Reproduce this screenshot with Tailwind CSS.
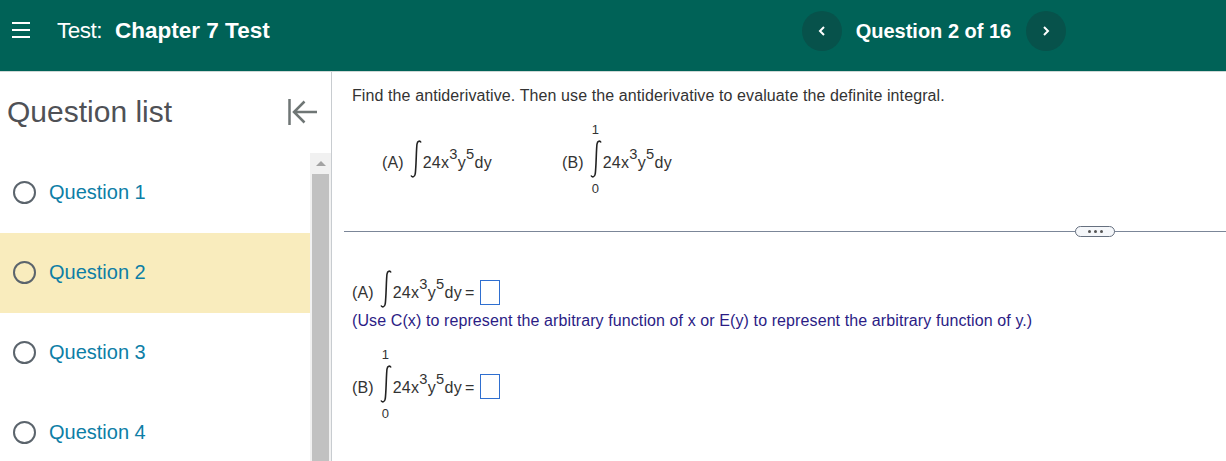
<!DOCTYPE html>
<html lang="en">
<head>
  <meta charset="UTF-8" />
  <title>Chapter 7 Test</title>
  <script src="https://cdn.jsdelivr.net/npm/@tailwindcss/browser@4"></script>
</head>
<body class="h-[461px] w-[1226px] overflow-hidden bg-white font-['Liberation_Sans',Arial,sans-serif]">

  <!-- Header -->
  <header class="flex h-[72px] items-start border-b border-[#cfd8d6] bg-[#006257] text-white">
    <button class="ml-3 mt-[22px] flex h-4 w-[18px] flex-col justify-between">
      <span class="h-[2px] w-full bg-white"></span>
      <span class="h-[2px] w-full bg-white"></span>
      <span class="h-[2px] w-full bg-white"></span>
    </button>
    <div class="ml-[27px] mt-[18px] flex text-[22.5px] leading-[26px]">
      <span class="tracking-[-0.5px]">Test:</span>
      <span class="ml-[13px] font-bold">Chapter 7 Test</span>
    </div>
    <div class="ml-[532px] mt-[11px] flex items-center">
      <button class="flex h-10 w-10 items-center justify-center rounded-full bg-[#07524b]">
        <svg width="8" height="10" viewBox="0 0 8 10" fill="none" stroke="white" stroke-width="2"><path d="M6 1 2 5l4 4" /></svg>
      </button>
      <span class="ml-[14px] text-[20px] font-bold leading-[40px]">Question 2 of 16</span>
      <button class="ml-[15px] flex h-10 w-10 items-center justify-center rounded-full bg-[#07524b]">
        <svg width="8" height="10" viewBox="0 0 8 10" fill="none" stroke="white" stroke-width="2"><path d="m2 1 4 4-4 4" /></svg>
      </button>
    </div>
  </header>

  <div class="flex h-[389px]">
    <!-- Question list -->
    <aside class="flex w-[332px] shrink-0 flex-col border-r border-[#c8ccd0]">
      <div class="flex h-[81px] shrink-0 items-start justify-between pl-[7px] pr-[14px]">
        <h2 class="mt-[22px] text-[30px] leading-[36px] text-[#4f5156]">Question list</h2>
        <svg class="mt-[27px]" width="29" height="27" viewBox="0 0 29 27" fill="none" stroke="#6f7675" stroke-width="2.500"><path d="M1.500 0v26M29 13H6M16.500 2.500 6 13l10.500 10.500" /></svg>
      </div>
      <div class="flex min-h-0 flex-1">
        <ul class="w-[310px] shrink-0">
          <li class="flex h-20 items-center pl-[13px] pb-[2px]">
            <span class="h-[23px] w-[23px] rounded-full border-[2.500px] border-[#5b646c]"></span>
            <span class="ml-[13px] text-[20px] text-[#0d7ea6]">Question 1</span>
          </li>
          <li class="flex h-20 items-center bg-[#f9ecbd] pl-[13px] pb-[2px]">
            <span class="h-[23px] w-[23px] rounded-full border-[2.500px] border-[#5b646c]"></span>
            <span class="ml-[13px] text-[20px] text-[#0d7ea6]">Question 2</span>
          </li>
          <li class="flex h-20 items-center pl-[13px] pb-[2px]">
            <span class="h-[23px] w-[23px] rounded-full border-[2.500px] border-[#5b646c]"></span>
            <span class="ml-[13px] text-[20px] text-[#0d7ea6]">Question 3</span>
          </li>
          <li class="flex h-20 items-center pl-[13px] pb-[2px]">
            <span class="h-[23px] w-[23px] rounded-full border-[2.500px] border-[#5b646c]"></span>
            <span class="ml-[13px] text-[20px] text-[#0d7ea6]">Question 4</span>
          </li>
        </ul>
        <!-- Scrollbar -->
        <div class="flex w-[21px] flex-col items-center bg-[#f1f1f1]">
          <div class="flex h-[21px] shrink-0 items-center justify-center">
            <span class="h-0 w-0 border-x-[5px] border-b-[5px] border-x-transparent border-b-[#a3a3a3]"></span>
          </div>
          <div class="w-[17px] flex-1 bg-[#c1c1c1]"></div>
        </div>
      </div>
    </aside>

    <!-- Question -->
    <main class="min-w-0 flex-1 text-[16px] leading-[17px] tracking-[0.1px] text-[#333]">
      <div class="h-[159px] pl-[20px] pt-[15px]">
        <p>Find the antiderivative. Then use the antiderivative to evaluate the definite integral.</p>
        <div class="ml-[30px] mt-[22px] flex">
          <div class="flex h-[66px] w-[180px] items-center">
            <span class="mr-[6px] mt-[6px]">(A)</span>
            <svg width="12" height="40" viewBox="0 0 12 40" fill="none" stroke="#222" stroke-width="1.600"><path d="M11 3.500C10 1.500 7.500 1.500 7 5 6.200 11 6.200 29 5.200 35 4.700 38.500 2 38.500 1 36.500" /></svg>
            <span class="ml-px mt-[6px] tracking-[0.3px]">24x<sup class="top-[-9px] text-[14.67px] leading-none">3</sup>y<sup class="top-[-9px] text-[14.67px] leading-none">5</sup>dy</span>
          </div>
          <div class="flex h-[66px] items-center">
            <span class="mr-[6px] mt-[6px]">(B)</span>
            <div class="relative flex">
              <span class="absolute left-[2px] top-[-18px] text-[13px]">1</span>
              <svg width="12" height="40" viewBox="0 0 12 40" fill="none" stroke="#222" stroke-width="1.600"><path d="M11 3.500C10 1.500 7.500 1.500 7 5 6.200 11 6.200 29 5.200 35 4.700 38.500 2 38.500 1 36.500" /></svg>
              <span class="absolute left-[2px] top-[41px] text-[13px]">0</span>
            </div>
            <span class="ml-px mt-[6px] tracking-[0.3px]">24x<sup class="top-[-9px] text-[14.67px] leading-none">3</sup>y<sup class="top-[-9px] text-[14.67px] leading-none">5</sup>dy</span>
          </div>
        </div>
      </div>

      <!-- Divider -->
      <div class="relative ml-[12px] h-px bg-[#7b8698]">
        <span class="absolute left-[731px] top-[-5px] flex h-[11px] w-[40px] items-center justify-center gap-[3px] rounded-[6px] border border-[#66707f] bg-[#f5f7fa]">
          <i class="h-[3px] w-[3px] rounded-full bg-[#555]"></i>
          <i class="h-[3px] w-[3px] rounded-full bg-[#555]"></i>
          <i class="h-[3px] w-[3px] rounded-full bg-[#555]"></i>
        </span>
      </div>

      <div class="pl-[20px] pt-[40px]">
        <div class="flex h-[34px] items-center">
          <span class="mr-[6px] mt-[6px]">(A)</span>
          <svg width="12" height="40" viewBox="0 0 12 40" fill="none" stroke="#222" stroke-width="1.600"><path d="M11 3.500C10 1.500 7.500 1.500 7 5 6.200 11 6.200 29 5.200 35 4.700 38.500 2 38.500 1 36.500" /></svg>
          <span class="ml-px mt-[6px] tracking-[0.3px]">24x<sup class="top-[-9px] text-[14.67px] leading-none">3</sup>y<sup class="top-[-9px] text-[14.67px] leading-none">5</sup>dy</span>
          <span class="ml-[3px] mt-[6px]">=</span>
          <span class="ml-[5px] mt-[6px] h-[25px] w-[20px] border border-[#2f6fd0]"></span>
        </div>
        <p class="mt-[6px] text-[#2b1c85]">(Use C(x) to represent the arbitrary function of x or E(y) to represent the arbitrary function of y.)</p>
        <div class="mt-[22px] flex h-[66px] items-center">
          <span class="mr-[6px] mt-[6px]">(B)</span>
          <div class="relative flex">
            <span class="absolute left-[2px] top-[-18px] text-[13px]">1</span>
            <svg width="12" height="40" viewBox="0 0 12 40" fill="none" stroke="#222" stroke-width="1.600"><path d="M11 3.500C10 1.500 7.500 1.500 7 5 6.200 11 6.200 29 5.200 35 4.700 38.500 2 38.500 1 36.500" /></svg>
            <span class="absolute left-[2px] top-[41px] text-[13px]">0</span>
          </div>
          <span class="ml-px mt-[6px] tracking-[0.3px]">24x<sup class="top-[-9px] text-[14.67px] leading-none">3</sup>y<sup class="top-[-9px] text-[14.67px] leading-none">5</sup>dy</span>
          <span class="ml-[3px] mt-[6px]">=</span>
          <span class="ml-[5px] mt-[5px] h-[25px] w-[20px] border border-[#2f6fd0]"></span>
        </div>
      </div>
    </main>
  </div>
</body>
</html>
